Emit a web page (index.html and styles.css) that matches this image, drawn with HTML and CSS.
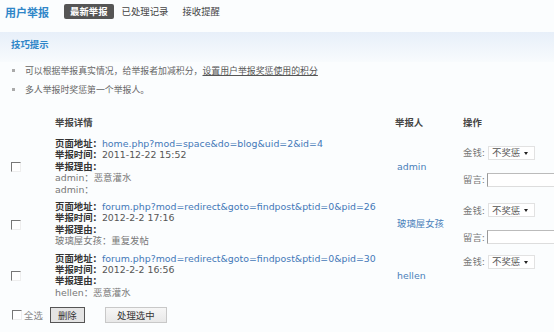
FILE: index.html
```html
<!DOCTYPE html>
<html lang="zh-CN">
<head>
  <meta charset="UTF-8">
  <title>用户举报</title>
  <link rel="stylesheet" href="styles.css">
</head>
<body>

<div class="topbar">
  <h1>用户举报</h1>
  <a class="tab active" href="#">最新举报</a>
  <a class="tab" href="#">已处理记录</a>
  <a class="tab" href="#">接收提醒</a>
</div>

<div class="tips">
  <div class="tips-title">技巧提示</div>
  <ul>
    <li>可以根据举报真实情况，给举报者加减积分，<a href="#">设置用户举报奖惩使用的积分</a></li>
    <li>多人举报时奖惩第一个举报人。</li>
  </ul>
</div>

<table class="reports">
  <colgroup>
    <col class="c-check">
    <col class="c-detail">
    <col class="c-user">
    <col class="c-ops">
  </colgroup>
  <thead>
    <tr>
      <th></th>
      <th>举报详情</th>
      <th class="user">举报人</th>
      <th class="ops">操作</th>
    </tr>
  </thead>
  <tbody>
    <tr>
      <td class="check"><input type="checkbox"></td>
      <td class="detail">
        <b>页面地址：</b><a href="#">home.php?mod=space&amp;do=blog&amp;uid=2&amp;id=4</a><br>
        <b>举报时间：</b><span class="time">2011-12-22 15:52</span><br>
        <b>举报理由：</b><br>
        admin：恶意灌水<br>
        admin：
      </td>
      <td class="user"><a href="#">admin</a></td>
      <td class="ops">
        <div class="op-line"><label>金钱:</label><span class="select"><select><option>不奖惩</option></select></span></div>
        <div class="op-line"><label>留言:</label><input type="text"></div>
      </td>
    </tr>
    <tr>
      <td class="check"><input type="checkbox"></td>
      <td class="detail">
        <b>页面地址：</b><a href="#">forum.php?mod=redirect&amp;goto=findpost&amp;ptid=0&amp;pid=26</a><br>
        <b>举报时间：</b><span class="time">2012-2-2 17:16</span><br>
        <b>举报理由：</b><br>
        玻璃屋女孩：重复发帖
      </td>
      <td class="user"><a href="#">玻璃屋女孩</a></td>
      <td class="ops">
        <div class="op-line"><label>金钱:</label><span class="select"><select><option>不奖惩</option></select></span></div>
        <div class="op-line"><label>留言:</label><input type="text"></div>
      </td>
    </tr>
    <tr>
      <td class="check"><input type="checkbox"></td>
      <td class="detail">
        <b>页面地址：</b><a href="#">forum.php?mod=redirect&amp;goto=findpost&amp;ptid=0&amp;pid=30</a><br>
        <b>举报时间：</b><span class="time">2012-2-2 16:56</span><br>
        <b>举报理由：</b><br>
        hellen：恶意灌水
      </td>
      <td class="user"><a href="#">hellen</a></td>
      <td class="ops">
        <div class="op-line"><label>金钱:</label><span class="select"><select><option>不奖惩</option></select></span></div>
        <div class="op-line hidden"><label>留言:</label><input type="text"></div>
      </td>
    </tr>
  </tbody>
</table>

<div class="footer">
  <input type="checkbox" id="chkall">
  <label for="chkall">全选</label>
  <button class="btn btn-del">删除</button>
  <button class="btn btn-do">处理选中</button>
</div>

</body>
</html>
```

FILE: styles.css
```css
html, body {
  overflow: hidden;
}
body {
  margin: 0;
  background: #fbfdfe;
  font-family: "DejaVu Sans", "Noto Sans CJK SC", sans-serif;
  font-size: 9.4px;
  color: #666;
}
a {
  color: #3b74b4;
  text-decoration: none;
}

/* top tabs */
.topbar {
  display: flex;
  align-items: center;
  height: 15px;
  padding: 4px 0 0 5px;
}
.topbar h1 {
  margin: 0 15px 0 0;
  font-size: 11px;
  color: #2f86c8;
}
.tab {
  margin-right: 2px;
  padding: 0 6px;
  line-height: 15px;
  color: #444;
}
.tab.active {
  background: #555;
  color: #fff;
  font-weight: bold;
  border-radius: 2px;
}

/* tips box */
.tips {
  margin-top: 13px;
}
.tips-title {
  height: 30px;
  line-height: 26px;
  padding-left: 11px;
  background: linear-gradient(#e7eff9, #f8fbfd);
  color: #2f86c8;
  font-weight: bold;
}
.tips ul {
  margin: 0;
  padding: 0;
  list-style: none;
}
.tips li {
  line-height: 19px;
  font-size: 8.9px;
}
.tips li::before {
  content: "";
  display: inline-block;
  width: 3px;
  height: 3px;
  margin: 0 10px 2px 12px;
  background: #aaa;
  vertical-align: middle;
}
.tips li a {
  color: #555;
  text-decoration: underline;
}

/* report table */
.reports {
  width: 554px;
  margin-top: 10px;
  border-collapse: collapse;
  table-layout: fixed;
}
.c-check { width: 55px; }
.c-detail { width: 340px; }
.c-user { width: 65px; }
.c-ops { width: 94px; }
.reports th {
  height: 24px;
  padding: 0;
  text-align: left;
  color: #444;
}
.reports td {
  padding: 4px 0 2px;
  vertical-align: middle;
  line-height: 11.4px;
}
.reports .user {
  padding-left: 2px;
}
.reports th.user {
  padding-left: 0;
}
.reports .ops {
  padding-left: 3px;
}
.detail {
  color: #777;
}
.detail b {
  color: #333;
}
.detail a {
  color: #4378b8;
}
.detail .time {
  color: #555;
}
.user a {
  color: #4a7fba;
}

input[type="checkbox"] {
  appearance: none;
  width: 10px;
  height: 10px;
  margin: 0;
  border: 1px solid;
  border-color: #777 #eee #eee #777;
  background: #fff;
  vertical-align: middle;
}
.check input {
  margin-left: 11px;
}

.op-line {
  display: flex;
  align-items: center;
  height: 14px;
  white-space: nowrap;
}
.op-line + .op-line {
  margin-top: 13px;
}
.op-line.hidden {
  visibility: hidden;
}
.op-line label {
  width: 25px;
  color: #777;
}
.select {
  position: relative;
  display: inline-block;
}
.select select {
  appearance: none;
  width: 47px;
  height: 14px;
  padding: 0 0 0 3px;
  border: 1px solid #e2e2e2;
  background: #fff;
  font: inherit;
  color: #555;
}
.select::after {
  content: "";
  position: absolute;
  right: 7px;
  top: 6px;
  border-left: 2px solid transparent;
  border-right: 2px solid transparent;
  border-top: 3px solid #222;
}
.op-line input {
  width: 72px;
  height: 14px;
  margin-left: 2px;
  padding: 0;
  box-sizing: border-box;
  border: 1px solid #ddd;
  border-left-color: #999;
  border-top-color: #bbb;
  background: #fff;
}

/* footer */
.footer {
  display: flex;
  align-items: center;
  margin-top: 7px;
  padding-left: 12px;
}
.footer label {
  margin-left: 2px;
  color: #888;
}
.btn {
  height: 16px;
  padding: 0;
  font: inherit;
  color: #333;
}
.btn-del {
  width: 35px;
  margin-left: 7px;
  border: 1px solid #555;
  background: #e4e4e4;
}
.btn-do {
  width: 62px;
  margin-left: 20px;
  border: 1px solid #c8c8c8;
  background: linear-gradient(#f6f6f6, #e8e8e8);
}
```
